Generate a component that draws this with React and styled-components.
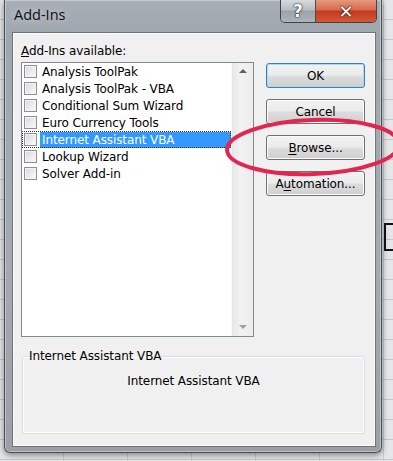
import React from 'react'
import styled, { createGlobalStyle } from 'styled-components'

const Global = createGlobalStyle`
  html, body {
    margin: 0;
    padding: 0;
  }
  body {
    width: 393px;
    height: 461px;
    overflow: hidden;
    font-family: "DejaVu Sans", Verdana, sans-serif;
    background-color: #e4e6e8;
    background-image:
      repeating-linear-gradient(180deg, transparent 0 19px, #c4c8cc 19px 20px),
      repeating-linear-gradient(90deg, transparent 0 63px, #c8ccd0 63px 64px);
  }
`

const Desk = styled.div`
  position: relative;
  width: 393px;
  height: 461px;
  overflow: hidden;
`

const CellMark = styled.div`
  position: absolute;
  left: 384px;
  top: 223px;
  width: 20px;
  height: 24px;
  border: 2px solid #111;
`

const Frame = styled.div`
  margin-left: 4px;
  width: 378px;
  height: 453px;
  border: 1px solid #4a4f55;
  border-top: none;
  border-radius: 0 0 6px 6px;
  background: linear-gradient(180deg, #a7aeb6 0%, #9fa7ae 8%, #a3a9af 60%, #9aa0a6 100%);
  box-shadow: 0 2px 6px rgba(0, 0, 0, 0.45), inset 0 0 0 1px rgba(255, 255, 255, 0.35);
  display: flex;
  flex-direction: column;
  padding: 0 5px 5px 7px;
  box-sizing: border-box;
`

const TitleBar = styled.div`
  height: 32px;
  display: flex;
  align-items: flex-start;
  justify-content: space-between;
`

const Title = styled.div`
  font-family: "Open Sans", "Noto Sans", sans-serif;
  font-size: 14.5px;
  color: #0e0e0e;
  padding: 5px 0 0 2px;
  text-shadow: 0 0 8px rgba(255, 255, 255, 0.7);
`

const Caption = styled.div`
  display: flex;
  margin-right: -1px;
  border: 1px solid #3f444a;
  border-top: none;
  border-radius: 0 0 5px 5px;
  overflow: hidden;
  height: 22px;
`

const CapButton = styled.div`
  width: ${p => p.$w}px;
  height: 22px;
  display: flex;
  align-items: center;
  justify-content: center;
  color: #fff;
  font-family: "DejaVu Sans", sans-serif;
  font-weight: bold;
  font-size: ${p => p.$fs}px;
  text-shadow: 0 0 2px rgba(0, 0, 0, 0.9), 0 0 1px #000;
  background: ${p => p.$red
    ? 'linear-gradient(180deg, #e5987f 0%, #d86a4d 45%, #c43a1c 50%, #d5573a 100%)'
    : 'linear-gradient(180deg, #d6dadd 0%, #b7bdc2 45%, #9ba2a8 50%, #aeb4b9 100%)'};
  & + & {
    border-left: 1px solid #4a4f55;
  }
`

const Client = styled.div`
  flex: 1;
  background: #f0f0f0;
  border: 1px solid #6f747a;
  box-shadow: inset 0 0 0 1px #fafafa;
  display: flex;
  flex-direction: column;
  padding: 12px 11px 10px 8px;
  font-size: 12px;
  color: #000;
`

const TopRow = styled.div`
  display: flex;
  gap: 12px;
`

const ListColumn = styled.div`
  display: flex;
  flex-direction: column;
`

const Label = styled.div`
  height: 17px;
  line-height: 13px;
  letter-spacing: -0.1px;
`

const ListBox = styled.div`
  width: 233px;
  height: 275px;
  box-sizing: border-box;
  border: 1px solid #828790;
  background: #fff;
  display: flex;
`

const Items = styled.div`
  flex: 1;
  display: flex;
  flex-direction: column;
`

const Item = styled.div`
  height: 17px;
  display: flex;
  align-items: center;
  position: relative;
  padding-left: 2px;
  ${p => p.$focus && `
    outline: 1px dotted #333;
    outline-offset: -1px;
  `}
`

const Check = styled.span`
  width: 13px;
  height: 13px;
  box-sizing: border-box;
  border: 1px solid #8e8f8f;
  background: linear-gradient(135deg, #d8d8d8 0%, #eeeeee 60%, #fbfbfb 100%);
  box-shadow: inset 0 0 0 1px #f4f4f4;
  margin-right: 3px;
  flex: none;
`

const ItemText = styled.span`
  flex: 1;
  height: 16px;
  line-height: 16px;
  padding-left: 2px;
  white-space: nowrap;
  letter-spacing: -0.1px;
  color: ${p => (p.$sel ? '#fff' : '#000')};
  background: ${p => (p.$sel ? '#3399ff' : 'transparent')};
`

const ScrollBar = styled.div`
  width: 21px;
  background: linear-gradient(90deg, #e6e6e6, #f2f2f2 40%, #ececec);
  border-left: 1px solid #f8f8f8;
  display: flex;
  flex-direction: column;
  justify-content: space-between;
  align-items: center;
  padding: 6px 0 7px;
`

const Arrow = styled.span`
  width: 0;
  height: 0;
  border-left: 4px solid transparent;
  border-right: 4px solid transparent;
  ${p => (p.$down
    ? 'border-top: 4px solid #a0a0a0;'
    : 'border-bottom: 4px solid #606060;')}
`

const Buttons = styled.div`
  display: flex;
  flex-direction: column;
  gap: 11px;
  padding-top: 18px;
`

const Button = styled.div`
  width: 99px;
  height: 25px;
  box-sizing: border-box;
  border: 1px solid ${p => (p.$default ? '#3c7fb1' : '#707070')};
  border-radius: 3px;
  background: linear-gradient(180deg, #f2f2f2 0%, #ebebeb 48%, #dddddd 52%, #cfcfcf 100%);
  box-shadow: inset 0 0 0 1px ${p => (p.$default ? '#a8dcf6' : '#fcfcfc')};
  display: flex;
  align-items: center;
  justify-content: center;
  letter-spacing: -0.1px;
  u {
    text-decoration: underline;
    text-underline-offset: 2px;
  }
`

const Group = styled.fieldset`
  margin: 12px 0 0 1px;
  width: 343px;
  height: 85px;
  box-sizing: border-box;
  border: 1px solid #d5dfe5;
  box-shadow: inset 0 0 0 1px #fff;
  border-radius: 3px;
  padding: 0;
  display: flex;
  justify-content: center;
  align-items: flex-start;
`

const Legend = styled.legend`
  padding: 0;
  margin-left: 6px;
  letter-spacing: -0.1px;
`

const Description = styled.div`
  margin-top: 11px;
  text-align: center;
  letter-spacing: -0.1px;
`

const Mark = styled.svg`
  position: absolute;
  left: 0;
  top: 0;
  pointer-events: none;
`

const addins = [
  'Analysis ToolPak',
  'Analysis ToolPak - VBA',
  'Conditional Sum Wizard',
  'Euro Currency Tools',
  'Internet Assistant VBA',
  'Lookup Wizard',
  'Solver Add-in',
]

const selected = 4

export default function App() {
  return (
    <Desk>
      <Global />
      <CellMark />
      <Frame>
        <TitleBar>
          <Title>Add-Ins</Title>
          <Caption>
            <CapButton $w={34} $fs={17}>?</CapButton>
            <CapButton $w={60} $fs={18} $red>✕</CapButton>
          </Caption>
        </TitleBar>
        <Client>
          <TopRow>
            <ListColumn>
              <Label><u>A</u>dd-Ins available:</Label>
              <ListBox>
                <Items>
                  {addins.map((name, i) => (
                    <Item key={name} $focus={i === selected}>
                      <Check />
                      <ItemText $sel={i === selected}>{name}</ItemText>
                    </Item>
                  ))}
                </Items>
                <ScrollBar>
                  <Arrow />
                  <Arrow $down />
                </ScrollBar>
              </ListBox>
            </ListColumn>
            <Buttons>
              <Button $default>OK</Button>
              <Button>Cancel</Button>
              <Button><span><u>B</u>rowse...</span></Button>
              <Button><span>A<u>u</u>tomation...</span></Button>
            </Buttons>
          </TopRow>
          <Group>
            <Legend>Internet Assistant VBA</Legend>
            <Description>Internet Assistant VBA</Description>
          </Group>
        </Client>
      </Frame>
      <Mark width="393" height="461" viewBox="0 0 393 461">
        <ellipse
          cx="313"
          cy="147"
          rx="86"
          ry="27"
          transform="rotate(-2 313 147)"
          fill="none"
          stroke="#e2264f"
          strokeWidth="4"
        />
      </Mark>
    </Desk>
  )
}
